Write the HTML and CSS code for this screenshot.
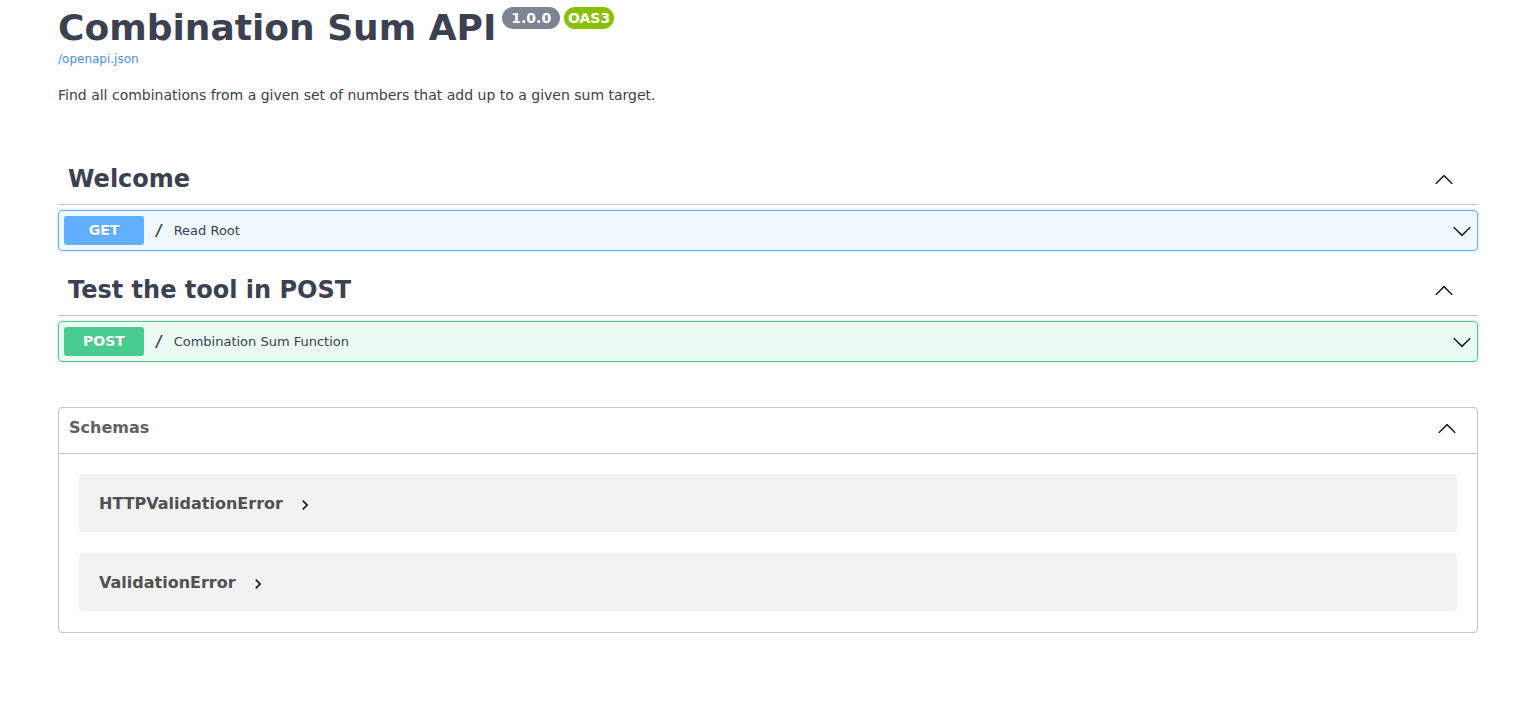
FILE: index.html
```html
<!DOCTYPE html>
<html lang="en">
<head>
<meta charset="utf-8">
<title>Combination Sum API</title>
<link rel="stylesheet" href="styles.css">
</head>
<body>
<div class="wrapper">
  <div class="info">
    <h2 class="title">
      <span class="title-text">Combination Sum API</span>
      <span class="badge badge-version"> 1.0.0 </span>
      <span class="badge badge-oas">OAS3</span>
    </h2>
    <a class="spec-link" href="#">/openapi.json</a>
    <p class="description">Find all combinations from a given set of numbers that add up to a given sum target.</p>
  </div>

  <section class="tag-section">
    <h3 class="tag">
      <span class="tag-name">Welcome</span>
      <svg class="tag-arrow" width="20" height="20" viewBox="0 0 20 20"><path d="M17.418 14.908c.272.268.709.268.979 0 .27-.268.271-.701 0-.969l-7.908-7.830c-.27-.268-.707-.268-.979 0l-7.908 7.830c-.27.268-.27.701 0 .969.271.268.709.268.979 0L10 7.767l7.418 7.141z" fill="#1b1b1b"/></svg>
    </h3>
    <div class="opblock opblock-get">
      <div class="summary">
        <span class="method method-get">GET</span>
        <span class="path">/</span>
        <span class="summary-desc">Read Root</span>
        <svg class="op-arrow" width="20" height="20" viewBox="0 0 20 20"><path d="M17.418 6.109c.272-.268.709-.268.979 0s.271.701 0 .969l-7.908 7.83c-.27.268-.707.268-.979 0l-7.908-7.83c-.27-.268-.27-.701 0-.969.271-.268.709-.268.979 0L10 13.25l7.418-7.141z" fill="#1b1b1b"/></svg>
      </div>
    </div>
  </section>

  <section class="tag-section">
    <h3 class="tag">
      <span class="tag-name">Test the tool in POST</span>
      <svg class="tag-arrow" width="20" height="20" viewBox="0 0 20 20"><path d="M17.418 14.908c.272.268.709.268.979 0 .27-.268.271-.701 0-.969l-7.908-7.830c-.27-.268-.707-.268-.979 0l-7.908 7.830c-.27.268-.27.701 0 .969.271.268.709.268.979 0L10 7.767l7.418 7.141z" fill="#1b1b1b"/></svg>
    </h3>
    <div class="opblock opblock-post">
      <div class="summary">
        <span class="method method-post">POST</span>
        <span class="path">/</span>
        <span class="summary-desc">Combination Sum Function</span>
        <svg class="op-arrow" width="20" height="20" viewBox="0 0 20 20"><path d="M17.418 6.109c.272-.268.709-.268.979 0s.271.701 0 .969l-7.908 7.83c-.27.268-.707.268-.979 0l-7.908-7.83c-.27-.268-.27-.701 0-.969.271-.268.709-.268.979 0L10 13.25l7.418-7.141z" fill="#1b1b1b"/></svg>
      </div>
    </div>
  </section>

  <section class="models">
    <h4 class="models-title">
      <span>Schemas</span>
      <svg class="models-arrow" width="20" height="20" viewBox="0 0 20 20"><path d="M17.418 14.908c.272.268.709.268.979 0 .27-.268.271-.701 0-.969l-7.908-7.830c-.27-.268-.707-.268-.979 0l-7.908 7.830c-.27.268-.27.701 0 .969.271.268.709.268.979 0L10 7.767l7.418 7.141z" fill="#1b1b1b"/></svg>
    </h4>
    <div class="models-list">
      <div class="model">
        <span class="model-title">HTTPValidationError</span>
        <svg class="model-toggle" width="20" height="20" viewBox="0 0 24 24"><path d="M10 6L8.59 7.41 13.17 12l-4.58 4.59L10 18l6-6z" fill="#1b1b1b"/></svg>
      </div>
      <div class="model">
        <span class="model-title">ValidationError</span>
        <svg class="model-toggle" width="20" height="20" viewBox="0 0 24 24"><path d="M10 6L8.59 7.41 13.17 12l-4.58 4.59L10 18l6-6z" fill="#1b1b1b"/></svg>
      </div>
    </div>
  </section>
</div>
</body>
</html>
```

FILE: styles.css
```css
html, body {
  margin: 0;
  padding: 0;
  background: #fff;
}

body {
  font-family: "DejaVu Sans", sans-serif;
  color: #3b4151;
}

.wrapper {
  padding: 7px 55px 0 58px;
}

.info {
  display: flex;
  flex-direction: column;
  align-items: flex-start;
}

.title {
  margin: 0;
  display: flex;
  align-items: flex-start;
  font-size: 36px;
  font-weight: 700;
  color: #3b4151;
  line-height: normal;
}

.badge {
  display: inline-block;
  font-size: 14px;
  font-weight: 700;
  color: #fff;
  border-radius: 57px;
  padding: 3px 4px;
  white-space: pre;
  line-height: normal;
}

.badge-version {
  background: #7d8492;
  margin-left: 6px;
}

.badge-oas {
  background: #89bf04;
  margin-left: 4px;
}

.spec-link {
  margin-top: 4px;
  font-size: 12px;
  color: #4990e2;
  text-decoration: none;
}

.description {
  margin: 21px 0 0;
  font-size: 14px;
  color: #3b4151;
}

.tag-section {
  display: flex;
  flex-direction: column;
}

.tag-section:first-of-type {
  margin-top: 52px;
}

.tag {
  box-sizing: border-box;
  height: 50px;
  margin: 0 0 5px;
  padding: 10px 24px 11px 10px;
  display: flex;
  align-items: center;
  justify-content: space-between;
  font-size: 24px;
  font-weight: 700;
  color: #3b4151;
  border-bottom: 1px solid rgba(59, 65, 81, 0.3);
}

.tag-arrow {
  display: block;
}

.opblock {
  border: 1px solid;
  border-radius: 4px;
  box-shadow: 0 0 3px rgba(0, 0, 0, 0.19);
  margin-bottom: 15px;
}

.opblock-get {
  background: rgba(97, 175, 254, 0.1);
  border-color: #61affe;
}

.opblock-post {
  background: rgba(73, 204, 144, 0.1);
  border-color: #49cc90;
}

.summary {
  display: flex;
  align-items: center;
  padding: 5px;
}

.method {
  width: 80px;
  padding: 6px 0;
  text-align: center;
  font-size: 14px;
  font-weight: 700;
  line-height: 17px;
  color: #fff;
  border-radius: 3px;
  text-shadow: 0 1px 0 rgba(0, 0, 0, 0.1);
}

.method-get {
  background: #61affe;
}

.method-post {
  background: #49cc90;
}

.path {
  padding: 0 10px;
  font-family: "DejaVu Sans Mono", monospace;
  font-size: 16px;
  font-weight: 600;
  color: #3b4151;
}

.summary-desc {
  flex: 1;
  font-size: 13px;
  color: #3b4151;
}

.op-arrow {
  display: block;
}

.models {
  margin-top: 30px;
  border: 1px solid rgba(59, 65, 81, 0.3);
  border-radius: 4px;
}

.models-title {
  box-sizing: border-box;
  height: 46px;
  margin: 0;
  padding: 10px 20px 0 10px;
  display: flex;
  align-items: flex-start;
  justify-content: space-between;
  font-size: 16px;
  font-weight: 700;
  color: #606060;
  border-bottom: 1px solid rgba(59, 65, 81, 0.3);
}

.models-arrow {
  display: block;
}

.models-list {
  display: flex;
  flex-direction: column;
  gap: 21px;
  padding: 20px 20px 21px;
}

.model {
  box-sizing: border-box;
  height: 58px;
  padding: 0 20px;
  display: flex;
  align-items: center;
  background: rgba(0, 0, 0, 0.05);
  border-radius: 4px;
}

.model-title {
  font-size: 16px;
  font-weight: 700;
  color: #505050;
}

.model-toggle {
  display: block;
  margin: 4px 0 0 12px;
}
```
